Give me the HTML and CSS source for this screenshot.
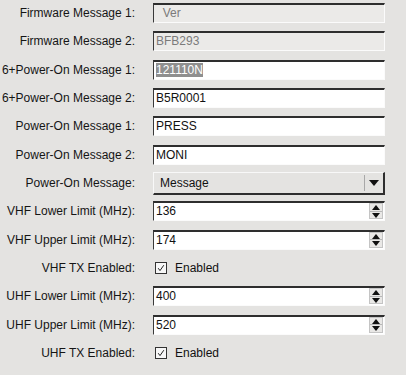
FILE: index.html
```html
<!DOCTYPE html>
<html>
<head>
<meta charset="utf-8">
<link rel="stylesheet" href="styles.css">
</head>
<body>
<div class="form">
  <div class="label">Firmware Message 1:</div>
  <div class="field disabled"><span class="pre">  Ver</span></div>

  <div class="label">Firmware Message 2:</div>
  <div class="field disabled">BFB293</div>

  <div class="label">6+Power-On Message 1:</div>
  <div class="field"><span class="sel">121110N</span></div>

  <div class="label">6+Power-On Message 2:</div>
  <div class="field">B5R0001</div>

  <div class="label">Power-On Message 1:</div>
  <div class="field">PRESS</div>

  <div class="label">Power-On Message 2:</div>
  <div class="field">MONI</div>

  <div class="label">Power-On Message:</div>
  <div class="select">
    <span class="select-text">Message</span>
    <span class="select-btn">
      <svg width="10" height="6" viewBox="0 0 10 6"><path d="M0 0H10L5 6Z" fill="#111"/></svg>
    </span>
  </div>

  <div class="label">VHF Lower Limit (MHz):</div>
  <div class="field spin">
    <span class="spin-text">136</span>
    <span class="spin-btns">
      <span class="spin-btn"><svg width="8" height="5" viewBox="0 0 8 5"><path d="M0 5H8L4 0Z" fill="#111"/></svg></span>
      <span class="spin-btn"><svg width="8" height="5" viewBox="0 0 8 5"><path d="M0 0H8L4 5Z" fill="#111"/></svg></span>
    </span>
  </div>

  <div class="label">VHF Upper Limit (MHz):</div>
  <div class="field spin">
    <span class="spin-text">174</span>
    <span class="spin-btns">
      <span class="spin-btn"><svg width="8" height="5" viewBox="0 0 8 5"><path d="M0 5H8L4 0Z" fill="#111"/></svg></span>
      <span class="spin-btn"><svg width="8" height="5" viewBox="0 0 8 5"><path d="M0 0H8L4 5Z" fill="#111"/></svg></span>
    </span>
  </div>

  <div class="label">VHF TX Enabled:</div>
  <div class="check">
    <span class="box"><svg width="10" height="10" viewBox="0 0 10 10"><path d="M2.2 5.2L4 7.6L7.8 2.2" fill="none" stroke="#222" stroke-width="1"/></svg></span>
    <span>Enabled</span>
  </div>

  <div class="label">UHF Lower Limit (MHz):</div>
  <div class="field spin">
    <span class="spin-text">400</span>
    <span class="spin-btns">
      <span class="spin-btn"><svg width="8" height="5" viewBox="0 0 8 5"><path d="M0 5H8L4 0Z" fill="#111"/></svg></span>
      <span class="spin-btn"><svg width="8" height="5" viewBox="0 0 8 5"><path d="M0 0H8L4 5Z" fill="#111"/></svg></span>
    </span>
  </div>

  <div class="label">UHF Upper Limit (MHz):</div>
  <div class="field spin">
    <span class="spin-text">520</span>
    <span class="spin-btns">
      <span class="spin-btn"><svg width="8" height="5" viewBox="0 0 8 5"><path d="M0 5H8L4 0Z" fill="#111"/></svg></span>
      <span class="spin-btn"><svg width="8" height="5" viewBox="0 0 8 5"><path d="M0 0H8L4 5Z" fill="#111"/></svg></span>
    </span>
  </div>

  <div class="label">UHF TX Enabled:</div>
  <div class="check">
    <span class="box"><svg width="10" height="10" viewBox="0 0 10 10"><path d="M2.2 5.2L4 7.6L7.8 2.2" fill="none" stroke="#222" stroke-width="1"/></svg></span>
    <span>Enabled</span>
  </div>
</div>
</body>
</html>
```

FILE: styles.css
```css
html, body {
  margin: 0;
  padding: 0;
  background: #e4e3e1;
}
body {
  font-family: "Liberation Sans", Arial, sans-serif;
  font-size: 12px;
  color: #111;
  width: 406px;
  height: 375px;
  overflow: hidden;
}
.form {
  display: grid;
  grid-template-columns: 135px 232px;
  grid-auto-rows: 28.333px;
  column-gap: 18px;
  align-items: center;
  margin-top: -1px;
}
.label {
  text-align: right;
  white-space: nowrap;
  color: #151515;
}
.field {
  box-sizing: border-box;
  height: 20px;
  background: #fff;
  border-top: 2px solid #2e2e2e;
  border-left: 1px solid #3a3a3a;
  border-right: 1px solid #fbfbfb;
  border-bottom: 1px solid #fbfbfb;
  padding: 0 2px;
  line-height: 17px;
  white-space: nowrap;
  overflow: hidden;
}
.field.disabled {
  background: #ebeae8;
  color: #7b7b7b;
}
.pre {
  white-space: pre;
}
.sel {
  background: #8f8f8f;
  color: #fff;
}
.select {
  box-sizing: border-box;
  height: 23px;
  display: flex;
  align-items: stretch;
  background: #e4e3e1;
  border-top: 1px solid #f8f8f8;
  border-left: 1px solid #f8f8f8;
  border-right: 2px solid #2e2e2e;
  border-bottom: 2px solid #2e2e2e;
}
.select-text {
  flex: 1;
  padding-left: 6px;
  line-height: 20px;
}
.select-btn {
  width: 18px;
  display: flex;
  align-items: center;
  justify-content: center;
  border-left: 1px solid #a8a8a8;
  margin: 2px 0;
}
.spin {
  display: flex;
  align-items: stretch;
  padding-right: 1px;
}
.spin-text {
  flex: 1;
}
.spin-btns {
  width: 14px;
  display: flex;
  flex-direction: column;
  margin: 0 0 1px 0;
  border: 1px solid #c4c4c4;
  box-sizing: border-box;
  background: #e9e8e6;
}
.spin-btn {
  flex: 1;
  display: flex;
  align-items: center;
  justify-content: center;
}
.spin-btn + .spin-btn {
  border-top: 1px solid #b8b8b8;
}
.check {
  display: flex;
  align-items: center;
  gap: 8px;
  padding-left: 2px;
}
.box {
  box-sizing: border-box;
  width: 12px;
  height: 12px;
  background: #f7f7f7;
  border: 1px solid #333;
  display: flex;
  align-items: center;
  justify-content: center;
}
.box svg {
  display: block;
}
```
